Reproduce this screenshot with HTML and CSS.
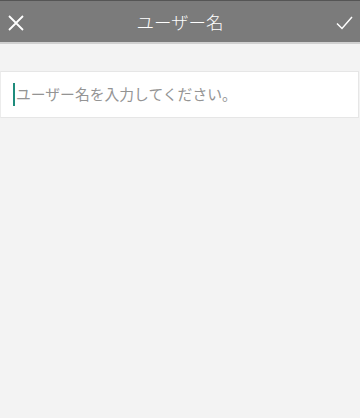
FILE: index.html
```html
<!DOCTYPE html>
<html lang="ja">
<head>
    <meta charset="UTF-8">
    <meta name="viewport" content="width=device-width, initial-scale=1.0">
    <title>ユーザー名</title>
    <link rel="stylesheet" href="styles.css">
</head>
<body>
    <div class="status-strip"></div>
    <header class="toolbar">
        <button class="icon-btn" aria-label="閉じる">
            <svg width="16" height="16" viewBox="0 0 16 16">
                <path d="M1 1 L15 15 M15 1 L1 15" stroke="#fff" stroke-width="1.8" fill="none"/>
            </svg>
        </button>
        <h1 class="title">ユーザー名</h1>
        <button class="icon-btn" aria-label="完了">
            <svg width="17" height="14" viewBox="0 0 17 14">
                <path d="M1 7.5 L6 12.5 L16 1" stroke="#fff" stroke-width="1.5" fill="none"/>
            </svg>
        </button>
    </header>
    <div class="toolbar-line"></div>

    <main class="content">
        <div class="field">
            <span class="caret"></span>
            <span class="placeholder">ユーザー名を入力してください。</span>
        </div>
    </main>
</body>
</html>
```

FILE: styles.css
```css
html, body {
    margin: 0;
    padding: 0;
}
body {
    font-family: "Noto Sans CJK JP", "Noto Sans", sans-serif;
    background-color: #f3f3f3;
    height: 418px;
    overflow: hidden;
}
.status-strip {
    height: 1px;
    background-color: #555555;
}
.toolbar {
    height: 41px;
    background-color: #7b7b7b;
    display: flex;
    align-items: center;
    justify-content: space-between;
    padding: 0 7px 0 7px;
}
.icon-btn {
    background: none;
    border: none;
    padding: 0;
    width: 18px;
    height: 17px;
    display: flex;
    align-items: center;
    justify-content: center;
    margin-top: 2px;
}
.title {
    margin: 0;
    font-size: 17.5px;
    font-weight: 300;
    color: #ffffff;
    line-height: 1;
}
.toolbar-line {
    height: 2px;
    background-color: #d0d0d0;
}
.content {
    padding-top: 27px;
}
.field {
    background-color: #ffffff;
    border: 1px solid #e6e6e6;
    border-left: 1px solid #ececec;
    height: 45px;
    display: flex;
    align-items: center;
    padding-left: 12px;
    margin-right: 1px;
}
.caret {
    width: 2px;
    height: 23px;
    background-color: #1e8c7c;
    margin-right: 1px;
}
.placeholder {
    font-size: 14.8px;
    color: #949494;
    line-height: 1;
}
```
